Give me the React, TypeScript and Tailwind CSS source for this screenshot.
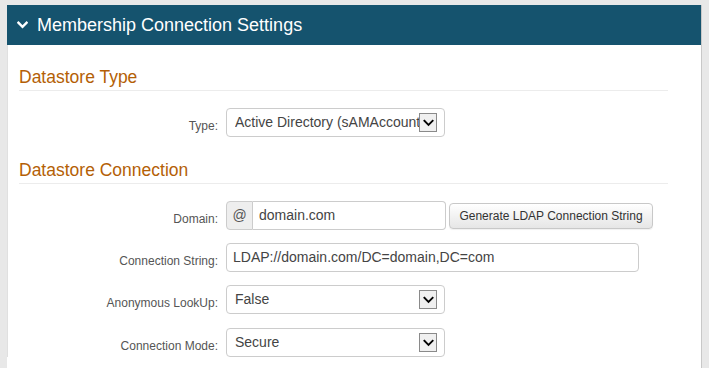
import React from "react";

const font = { fontFamily: '"Liberation Sans", Arial, sans-serif' };

function Chevron({ className, width = 2.6 }: { className?: string; width?: number }) {
  return (
    <svg viewBox="0 0 12 8" className={className} fill="none">
      <polyline points="1.5,1.5 6,6 10.5,1.5" stroke="currentColor" strokeWidth={width} strokeLinecap="square" />
    </svg>
  );
}

// Old-style native select: white box, grey arrow button on the right
function Select({ value }: { value: string }) {
  return (
    <div className="flex h-[29px] w-[219px] items-center rounded-[4px] border border-[#cccccc] bg-white pl-[8px] pr-[7px]">
      <div className="min-w-0 flex-1 overflow-hidden whitespace-nowrap text-[14px] text-[#444]">{value}</div>
      <div className="flex h-[19px] w-[18px] shrink-0 items-center justify-center border border-[#8a8a8a] bg-[#f0f0f0]">
        <Chevron className="h-[8px] w-[11px] text-black" width={2} />
      </div>
    </div>
  );
}

function Row({ label, children, last }: { label: string; children: React.ReactNode; last?: boolean }) {
  return (
    <div className={`flex ${last ? "" : "mb-[13px]"}`}>
      <div className="w-[199px] shrink-0 pt-[10px] text-right text-[12px] leading-[17px] text-[#555]">{label}</div>
      <div className="ml-[8px] flex items-start">{children}</div>
    </div>
  );
}

function Heading({ children }: { children: React.ReactNode }) {
  return (
    <h3 className="mr-[21px] border-b border-[#ececec] pb-[3px] text-[17.5px] leading-[20px] text-[#b45f06]">
      {children}
    </h3>
  );
}

export default function App() {
  return (
    <div className="min-h-[368px] bg-[#e8e8e8] pl-[7px] pr-[7px] pt-[5px]" style={font}>
      <div className="h-[363px] overflow-hidden border-r border-[#c8c8c8] bg-white">
        <div className="flex h-[40px] items-center bg-[#15536e] pl-[10px] text-white">
          <Chevron className="h-[8px] w-[11px]" />
          <span className="ml-[9px] text-[18px] leading-[40px]">Membership Connection Settings</span>
        </div>
        <div className="border-l border-[#e0e0e0] pl-[11px] pr-[12px]">
          <div className="pt-[22px]">
            <Heading>Datastore Type</Heading>
          </div>
          <div className="pt-[17px]">
            <Row label="Type:" last>
              <Select value="Active Directory (sAMAccountName)" />
            </Row>
          </div>
          <div className="pt-[23px]">
            <Heading>Datastore Connection</Heading>
          </div>
          <div className="pt-[17px]">
            <Row label="Domain:">
              <div className="flex h-[29px] w-[220px]">
                <div className="flex w-[27px] items-center justify-center rounded-l-[4px] border border-[#cccccc] bg-[#eeeeee] text-[14px] text-[#555]">
                  @
                </div>
                <div className="flex flex-1 items-center rounded-r-[4px] border border-l-0 border-[#cccccc] pl-[6px] text-[14px] text-[#444]">
                  domain.com
                </div>
              </div>
              <button
                type="button"
                className="ml-[3px] mt-[2px] h-[26px] w-[204px] rounded-[4px] border border-[#c8c8c8] bg-gradient-to-b from-white to-[#e6e6e6] text-[12px] text-[#333] shadow-[0_1px_1px_rgba(0,0,0,0.06)]"
              >
                Generate LDAP Connection String
              </button>
            </Row>
            <Row label="Connection String:">
              <div className="flex h-[29px] w-[413px] items-center rounded-[4px] border border-[#cccccc] pl-[6px] text-[14px] text-[#444]">
                LDAP://domain.com/DC=domain,DC=com
              </div>
            </Row>
            <Row label="Anonymous LookUp:">
              <Select value="False" />
            </Row>
            <div className="h-px" />
            <Row label="Connection Mode:" last>
              <Select value="Secure" />
            </Row>
          </div>
        </div>
      </div>
    </div>
  );
}
